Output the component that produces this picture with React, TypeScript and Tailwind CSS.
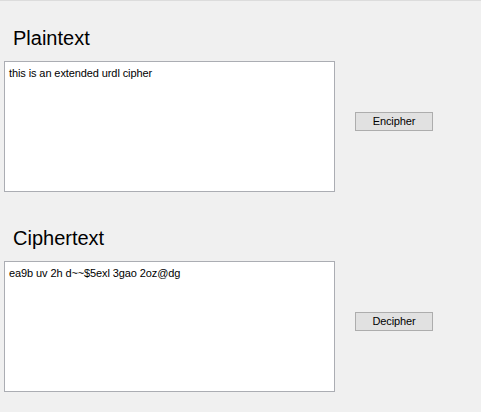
import React from "react";

function Section({ title, text, button, pt }: { title: string; text: string; button: string; pt: string }) {
  return (
    <div className={pt}>
      <div className="pl-[13px] text-[20px] leading-[24px] text-black">{title}</div>
      <div className="flex items-start mt-[11px] pl-[4px]">
        <div className="w-[331px] h-[131px] bg-white border border-[#abadb3] px-[4px] pt-[5px] text-[11px] leading-[13px] tracking-[-0.1px] text-black whitespace-pre">
          {text}
        </div>
        <button className="ml-[20px] mt-[51px] w-[78px] h-[19px] border border-[#adadad] bg-[#e1e1e1] text-[11px] leading-[13px] tracking-[-0.1px] text-black flex items-center justify-center">
          {button}
        </button>
      </div>
    </div>
  );
}

export default function App() {
  return (
    <div className="w-[481px] h-[412px] bg-[#f0f0f0] border-t border-[#dcdcdc] font-['Liberation_Sans',Arial,sans-serif] overflow-hidden">
      <Section pt="pt-[25px]" title="Plaintext" text="this is an extended urdl cipher" button="Encipher" />
      <Section pt="pt-[34px]" title="Ciphertext" text="ea9b uv 2h d~~$5exl 3gao 2oz@dg" button="Decipher" />
    </div>
  );
}
